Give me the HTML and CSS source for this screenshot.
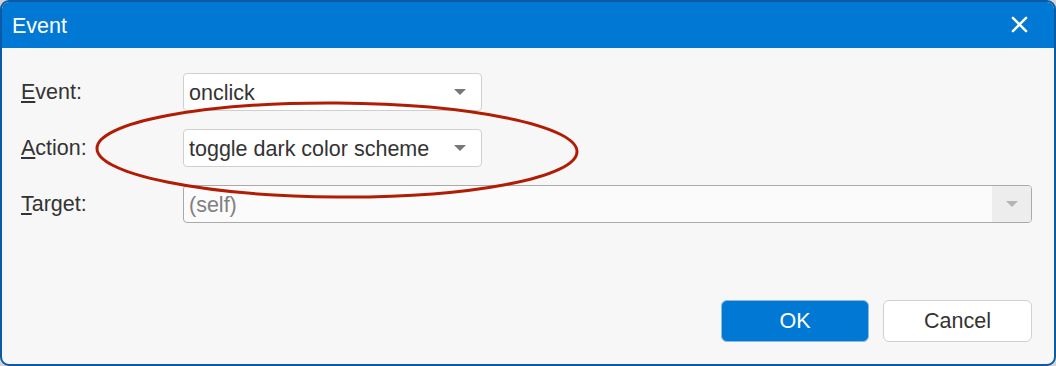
FILE: index.html
```html
<!DOCTYPE html>
<html lang="en">
<head>
  <meta charset="UTF-8" />
  <title>Event</title>
  <link rel="stylesheet" href="styles.css">
</head>
<body>
  <div class="ventana">
    <div class="titulo">
      <span>Event</span>
      <svg class="cerrar" width="18" height="18" viewBox="0 0 18 18">
        <path d="M2 2 L16 16 M16 2 L2 16" stroke="#fff" stroke-width="2.6" stroke-linecap="round"/>
      </svg>
    </div>

    <div class="cuerpo">
      <div class="fila">
        <label><u>E</u>vent:</label>
        <div class="combo corto">
          <span>onclick</span>
          <i class="flecha"></i>
        </div>
      </div>

      <div class="fila">
        <label><u>A</u>ction:</label>
        <div class="combo corto">
          <span>toggle dark color scheme</span>
          <i class="flecha"></i>
        </div>
      </div>

      <div class="fila">
        <label><u>T</u>arget:</label>
        <div class="combo largo desactivado">
          <span>(self)</span>
          <div class="boton-flecha"><i class="flecha"></i></div>
        </div>
      </div>

      <div class="botones">
        <button class="ok">OK</button>
        <button>Cancel</button>
      </div>

      <svg class="marca" width="490" height="104" viewBox="0 0 490 104">
        <ellipse cx="245" cy="51" rx="240" ry="47" fill="none" stroke="#b11c05" stroke-width="3" transform="rotate(0.4 245 51)"/>
      </svg>
    </div>
  </div>
</body>
</html>
```

FILE: styles.css
```css
body {
  margin: 0;
  background: #d4d4d4;
  font-family: 'Liberation Sans', Arial, sans-serif;
  color: #333;
}

.ventana {
  height: 366px;
  box-sizing: border-box;
  border: 2px solid #0a5aa6;
  border-radius: 9px;
  overflow: hidden;
  background: #f7f7f7;
  display: flex;
  flex-direction: column;
}

.titulo {
  height: 46px;
  background: #0078d4;
  color: white;
  font-size: 21.5px;
  display: flex;
  align-items: center;
  justify-content: space-between;
  padding: 0 26px 0 10px;
  flex-shrink: 0;
}

.titulo span {
  margin-top: 2px;
}

.cerrar {
  width: 17px;
  height: 17px;
  margin-top: -2px;
}

.cuerpo {
  position: relative;
  flex: 1;
  padding: 25px 22px 0 19px;
}

.fila {
  display: flex;
  align-items: center;
  margin-bottom: 18px;
}

label {
  width: 162px;
  font-size: 21.5px;
  padding-top: 1px;
}

.combo {
  height: 38px;
  box-sizing: border-box;
  border: 1px solid #cfcfcf;
  border-radius: 4px;
  background: white;
  display: flex;
  align-items: center;
  justify-content: space-between;
  padding-left: 5px;
  font-size: 21.5px;
}

.combo span {
  padding-top: 2px;
}

.corto {
  width: 299px;
  padding-right: 15px;
}

.largo {
  flex: 1;
}

.desactivado {
  background: #fbfbfb;
  border-color: #a9a9a9;
  color: #808080;
}

.boton-flecha {
  width: 39px;
  align-self: stretch;
  background: #ededed;
  border-radius: 0 3px 3px 0;
  display: flex;
  align-items: center;
  justify-content: center;
}

.flecha {
  width: 0;
  height: 0;
  border-left: 6px solid transparent;
  border-right: 6px solid transparent;
  border-top: 6px solid #777;
}

.desactivado .flecha {
  border-top-color: #b5b5b5;
}

.botones {
  display: flex;
  justify-content: flex-end;
  gap: 14px;
  margin-top: 77px;
}

button {
  width: 149px;
  height: 42px;
  border: 1px solid #d0d0d0;
  border-radius: 6px;
  background: white;
  color: #333;
  font-family: inherit;
  font-size: 21.5px;
}

button.ok {
  width: 148px;
  background: #0078d4;
  border-color: #8fb8e0;
  color: white;
}

.marca {
  position: absolute;
  left: 90px;
  top: 51px;
}
```
